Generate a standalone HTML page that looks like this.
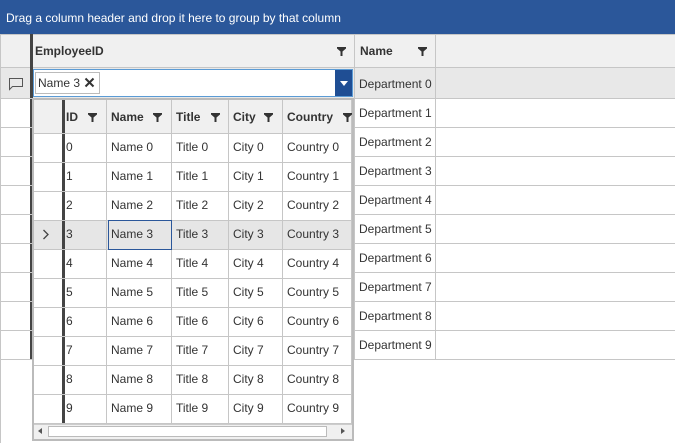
<!DOCTYPE html><html><head><style>
*{box-sizing:border-box;margin:0;padding:0}
body{width:675px;height:443px;background:#fff;font-family:"Liberation Sans",sans-serif;font-size:12px;color:#333;position:relative;overflow:hidden}
.a{position:absolute}
.hl{position:absolute;height:1px;background:#c6c6c6}
.vl{position:absolute;width:1px;background:#c6c6c6}
.t{position:absolute;white-space:nowrap;line-height:14px}
.b{font-weight:bold;color:#333}
.f{position:absolute;width:9px;height:9px}
</style></head><body>
<svg width="0" height="0" style="position:absolute"><defs><symbol id="fn" viewBox="0 0 9 9"><path d="M0 0h9v1.5L5.5 4.5V9h-2V4.5L0 1.5z" fill="#333"/></symbol></defs></svg>
<div class="a" style="left:0;top:0;width:675px;height:34px;background:#2b579a"></div>
<div class="t" style="left:6px;top:11px;color:#fff">Drag a column header and drop it here to group by that column</div>
<div class="a" style="left:0;top:34px;width:675px;height:34px;background:#f0f0f0"></div>
<div class="hl" style="left:0;top:34px;width:675px"></div>
<div class="hl" style="left:0;top:67px;width:675px"></div>
<div class="a" style="left:0;top:68px;width:675px;height:30px;background:#e8e8e8"></div>
<div class="t b" style="left:35px;top:44px">EmployeeID</div>
<svg class="f" style="left:337px;top:47px"><use href="#fn"/></svg>
<div class="vl" style="left:354px;top:34px;height:325px"></div>
<div class="t b" style="left:360px;top:44px">Name</div>
<svg class="f" style="left:418px;top:47px"><use href="#fn"/></svg>
<div class="vl" style="left:435px;top:34px;height:325px"></div>
<div class="vl" style="left:0;top:34px;height:409px"></div>
<div class="vl" style="left:31px;top:34px;height:325px"></div>
<div class="a" style="left:30px;top:34px;width:3px;height:325px;background:#444"></div>
<div class="hl" style="left:0;top:98px;width:675px"></div>
<div class="hl" style="left:0;top:127px;width:675px"></div>
<div class="hl" style="left:0;top:156px;width:675px"></div>
<div class="hl" style="left:0;top:185px;width:675px"></div>
<div class="hl" style="left:0;top:214px;width:675px"></div>
<div class="hl" style="left:0;top:243px;width:675px"></div>
<div class="hl" style="left:0;top:272px;width:675px"></div>
<div class="hl" style="left:0;top:301px;width:675px"></div>
<div class="hl" style="left:0;top:330px;width:675px"></div>
<div class="hl" style="left:0;top:359px;width:675px"></div>
<div class="t" style="left:359px;top:77px">Department 0</div>
<div class="t" style="left:359px;top:106px">Department 1</div>
<div class="t" style="left:359px;top:135px">Department 2</div>
<div class="t" style="left:359px;top:164px">Department 3</div>
<div class="t" style="left:359px;top:193px">Department 4</div>
<div class="t" style="left:359px;top:222px">Department 5</div>
<div class="t" style="left:359px;top:251px">Department 6</div>
<div class="t" style="left:359px;top:280px">Department 7</div>
<div class="t" style="left:359px;top:309px">Department 8</div>
<div class="t" style="left:359px;top:338px">Department 9</div>
<svg class="a" style="left:8px;top:77px" width="16" height="14"><path d="M1.5 1.5h13v8h-10l-3 3z" fill="none" stroke="#555"/></svg>
<div class="a" style="left:33px;top:69px;width:320px;height:28px;background:#fff;border:1px solid #5b9bd5"></div>
<div class="a" style="left:35px;top:72px;width:65px;height:22px;border:1px solid #bbb;background:#fff"></div>
<div class="t" style="left:38px;top:76px">Name 3</div>
<svg class="a" style="left:84px;top:77px" width="11" height="11"><path d="M1.5 1.5l8 8M9.5 1.5l-8 8" stroke="#333" stroke-width="2"/></svg>
<div class="a" style="left:335px;top:70px;width:17px;height:26px;background:#1f4e94"></div>
<div class="a" style="left:340px;top:81px;width:0;height:0;border-left:4px solid transparent;border-right:4px solid transparent;border-top:5px solid #fff"></div>
<div class="a" style="left:32px;top:98px;width:322px;height:343px;background:#fff;border:2px solid #bbb"></div>
<div class="a" style="left:34px;top:100px;width:318px;height:34px;background:#f0f0f0"></div>
<div class="a" style="left:34px;top:220px;width:318px;height:29px;background:#e6e6e6"></div>
<div class="a" style="left:62px;top:100px;width:3px;height:323px;background:#444"></div>
<div class="vl" style="left:106px;top:100px;height:323px"></div>
<div class="vl" style="left:171px;top:100px;height:323px"></div>
<div class="vl" style="left:228px;top:100px;height:323px"></div>
<div class="vl" style="left:282px;top:100px;height:323px"></div>
<div class="vl" style="left:351px;top:100px;height:323px"></div>
<div class="hl" style="left:34px;top:133px;width:318px"></div>
<div class="hl" style="left:34px;top:162px;width:318px"></div>
<div class="hl" style="left:34px;top:191px;width:318px"></div>
<div class="hl" style="left:34px;top:220px;width:318px"></div>
<div class="hl" style="left:34px;top:249px;width:318px"></div>
<div class="hl" style="left:34px;top:278px;width:318px"></div>
<div class="hl" style="left:34px;top:307px;width:318px"></div>
<div class="hl" style="left:34px;top:336px;width:318px"></div>
<div class="hl" style="left:34px;top:365px;width:318px"></div>
<div class="hl" style="left:34px;top:394px;width:318px"></div>
<div class="hl" style="left:34px;top:423px;width:318px"></div>
<div class="t b" style="left:66px;top:110px">ID</div><svg class="f" style="left:88px;top:113px"><use href="#fn"/></svg>
<div class="t b" style="left:111px;top:110px">Name</div><svg class="f" style="left:153px;top:113px"><use href="#fn"/></svg>
<div class="t b" style="left:176px;top:110px">Title</div><svg class="f" style="left:211px;top:113px"><use href="#fn"/></svg>
<div class="t b" style="left:233px;top:110px">City</div><svg class="f" style="left:264px;top:113px"><use href="#fn"/></svg>
<div class="t b" style="left:287px;top:110px">Country</div><svg class="f" style="left:343px;top:113px"><use href="#fn"/></svg>
<div class="a" style="left:108px;top:220px;width:64px;height:30px;border:1px solid #2b579a"></div>
<svg class="a" style="left:42px;top:229px" width="8" height="11"><path d="M1.5 1l4.5 4.5-4.5 4.5" fill="none" stroke="#444" stroke-width="1.3"/></svg>
<div id="rows"></div>
<script>
var h='';for(var i=0;i<10;i++){var y=140+29*i;
h+='<div class="t" style="left:66px;top:'+y+'px">'+i+'</div><div class="t" style="left:111px;top:'+y+'px">Name '+i+'</div><div class="t" style="left:176px;top:'+y+'px">Title '+i+'</div><div class="t" style="left:233px;top:'+y+'px">City '+i+'</div><div class="t" style="left:287px;top:'+y+'px">Country '+i+'</div>';}
document.getElementById('rows').outerHTML=h;
</script>
<div class="a" style="left:34px;top:424px;width:318px;height:15px;background:#f0f0f0;border-top:1px solid #ccc"></div>
<div class="a" style="left:48px;top:426px;width:279px;height:11px;background:#fff;border:1px solid #bbb"></div>
<div class="a" style="left:38px;top:428px;width:0;height:0;border-top:3px solid transparent;border-bottom:3px solid transparent;border-right:4px solid #555"></div>
<div class="a" style="left:341px;top:428px;width:0;height:0;border-top:3px solid transparent;border-bottom:3px solid transparent;border-left:4px solid #555"></div>
</body></html>
